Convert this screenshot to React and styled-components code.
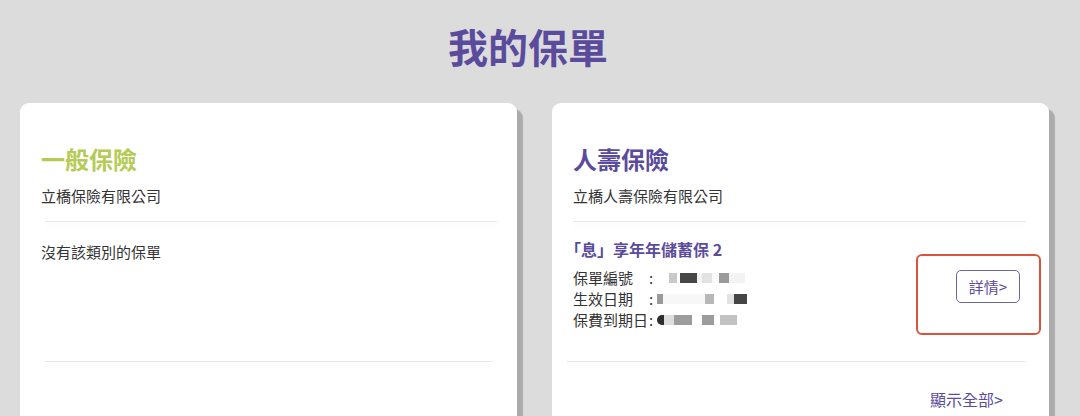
import React from "react";
import styled, { createGlobalStyle } from "styled-components";

const GlobalStyle = createGlobalStyle`
  html, body {
    margin: 0;
    padding: 0;
    background: #dcdcdc;
    font-family: "Noto Sans CJK TC", "Noto Sans", sans-serif;
    color: #333;
  }
`;

const Page = styled.div`
  width: 1080px;
  height: 416px;
  overflow: hidden;
  box-sizing: border-box;
  padding: 0 32px 0 20px;
`;

const PageTitle = styled.h1`
  margin: 0;
  padding: 20px 12px 0 0;
  height: 80px;
  box-sizing: border-box;
  text-align: center;
  font-size: 40px;
  line-height: 52px;
  font-weight: 700;
  color: #5a4b9c;
`;

const Columns = styled.div`
  display: grid;
  grid-template-columns: 497px 497px;
  column-gap: 35px;
  margin-top: 23px;
`;

const Card = styled.section`
  background: #fff;
  border-radius: 9px;
  height: 340px;
  box-shadow: 6px 6px 1px rgba(0, 0, 0, 0.22);
  padding: 40px 20px 0 21px;
  box-sizing: border-box;
  display: flex;
  flex-direction: column;
`;

const CardTitle = styled.h2`
  margin: 0;
  font-size: 24px;
  line-height: 32px;
  font-weight: 700;
  color: ${(p) => p.$color};
`;

const Company = styled.div`
  margin-top: 11px;
  font-size: 15px;
  line-height: 20px;
  color: #333;
`;

const Divider = styled.div`
  height: 1px;
  margin: ${(p) => p.$margin};
  background: #e9e9e9;
  box-shadow: 0 3px 5px rgba(0, 0, 0, 0.08);
`;

const Empty = styled.div`
  height: 139px;
  padding-top: 20px;
  box-sizing: border-box;
  font-size: 15px;
  line-height: 20px;
  color: #333;
`;

const PolicyRow = styled.div`
  height: 139px;
  display: flex;
  justify-content: space-between;
  align-items: flex-start;
`;

const PolicyInfo = styled.div`
  padding-top: 16px;
`;

const PolicyName = styled.div`
  font-size: 16px;
  line-height: 22px;
  font-weight: 700;
  color: #5a4b9c;
  margin-bottom: 7px;
  margin-left: -8px;
`;

const Field = styled.div`
  display: flex;
  align-items: center;
  font-size: 15px;
  line-height: 21px;
  color: #333;
`;

const Label = styled.span`
  width: 76px;
`;

const Colon = styled.span`
  width: 8px;
`;

const Masked = styled.div`
  display: flex;
  align-items: center;
  height: 21px;
`;

const Pixel = styled.span`
  display: inline-block;
  width: ${(p) => p.$w}px;
  height: 10px;
  background: ${(p) => p.$c};
  border-radius: ${(p) => (p.$round ? "5px 0 0 5px" : "0")};
`;

const Highlight = styled.div`
  margin-top: 32px;
  width: 125px;
  height: 81px;
  box-sizing: border-box;
  border: 2px solid #d8553b;
  border-radius: 6px;
  padding: 14px 20px 0 38px;
  margin-right: -12px;
`;

const DetailButton = styled.button`
  width: 64px;
  height: 33px;
  box-sizing: border-box;
  border: 1px solid #6e64a8;
  border-radius: 5px;
  background: #fff;
  color: #5a4b9c;
  font-family: inherit;
  font-size: 15px;
  padding: 0;
  cursor: pointer;
`;

const ShowAll = styled.a`
  align-self: flex-end;
  margin-top: 27px;
  margin-right: 26px;
  font-size: 16px;
  line-height: 20px;
  color: #5a4b9c;
  text-decoration: none;
`;

const maskRows = [
  [
    [12, "#fff"],
    [8, "#c9c9c9"],
    [3, "#fff"],
    [17, "#464646"],
    [5, "#f4f4f4"],
    [10, "#e2e2e2"],
    [7, "#fafafa"],
    [10, "#9a9a9a"],
    [16, "#f3f3f3"],
  ],
  [
    [6, "#9a9a9a"],
    [42, "#f7f7f7"],
    [9, "#b7b7b7"],
    [13, "#fff"],
    [7, "#e2e2e2"],
    [13, "#454545"],
  ],
  [
    [7, "#2e2e2e", true],
    [10, "#dedede"],
    [18, "#9d9d9d"],
    [10, "#fff"],
    [12, "#9c9c9c"],
    [6, "#fff"],
    [17, "#c2c2c2"],
  ],
];

const MaskedValue = ({ cells }) => (
  <Masked>
    {cells.map(([w, c, round], i) => (
      <Pixel key={i} $w={w} $c={c} $round={round} />
    ))}
  </Masked>
);

const fields = [
  ["保單編號", maskRows[0]],
  ["生效日期", maskRows[1]],
  ["保費到期日", maskRows[2]],
];

export default function App() {
  return (
    <>
      <GlobalStyle />
      <Page>
        <PageTitle>我的保單</PageTitle>
        <Columns>
          <Card>
            <CardTitle $color="#b5cb55">一般保險</CardTitle>
            <Company>立橋保險有限公司</Company>
            <Divider $margin="15px 0 0 4px" />
            <Empty>沒有該類別的保單</Empty>
            <Divider $margin="0 4px 0 4px" />
          </Card>
          <Card>
            <CardTitle $color="#5a4b9c">人壽保險</CardTitle>
            <Company>立橋人壽保險有限公司</Company>
            <Divider $margin="15px 3px 0 0" />
            <PolicyRow>
              <PolicyInfo>
                <PolicyName>「息」享年年儲蓄保 2</PolicyName>
                {fields.map(([label, cells]) => (
                  <Field key={label}>
                    <Label>{label}</Label>
                    <Colon>:</Colon>
                    <MaskedValue cells={cells} />
                  </Field>
                ))}
              </PolicyInfo>
              <Highlight>
                <DetailButton>詳情&gt;</DetailButton>
              </Highlight>
            </PolicyRow>
            <Divider $margin="0 3px 0 -6px" />
            <ShowAll href="#">顯示全部&gt;</ShowAll>
          </Card>
        </Columns>
      </Page>
    </>
  );
}
